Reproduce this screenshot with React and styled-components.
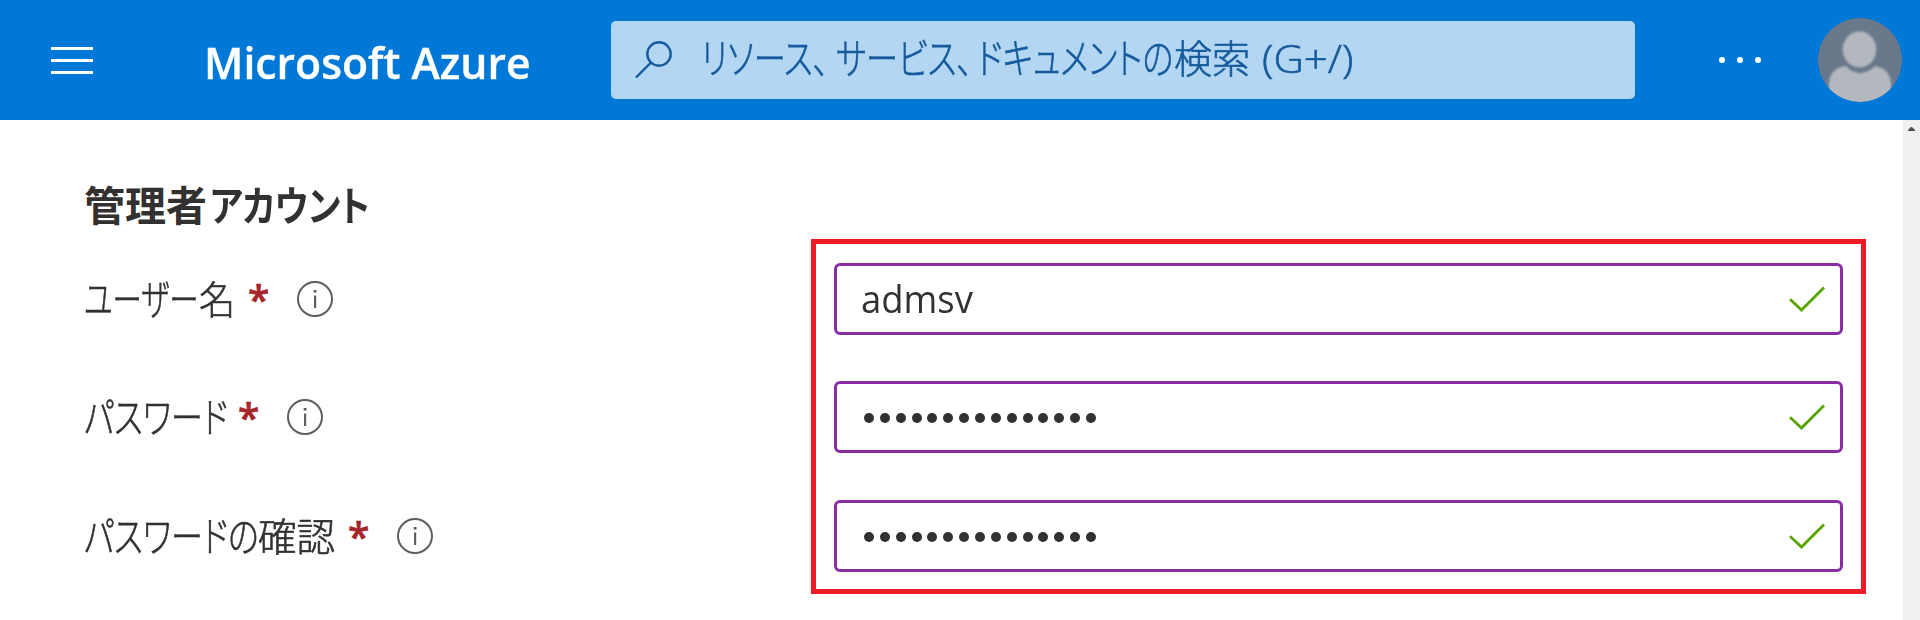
import React from "react";
import styled, { createGlobalStyle } from "styled-components";

const GlobalStyle = createGlobalStyle`
  * { box-sizing: border-box; }
  body {
    margin: 0;
    background: #fff;
    overflow: hidden;
    color: #323130;
    font-family: "Open Sans", "Noto Sans CJK JP", sans-serif;
  }
  svg { display: block; }
`;

const Page = styled.div`
  width: 1920px;
  height: 620px;
  display: flex;
  flex-direction: column;
`;

const TopBar = styled.header`
  height: 120px;
  flex: none;
  display: flex;
  align-items: center;
  background: #0078d7;
  padding: 0 18px 0 51px;
`;

const MenuButton = styled.div`
  width: 42px;
  height: 27px;
  display: flex;
  flex-direction: column;
  justify-content: space-between;
`;

const MenuLine = styled.span`
  height: 3px;
  background: #fff;
`;

const Brand = styled.div`
  margin-left: 111px;
  width: 407px;
  color: #fff;
  font-size: 44px;
  font-weight: 600;
  line-height: 60px;
  padding-top: 4px;
  white-space: nowrap;
  -webkit-text-stroke: 0.4px currentColor;
`;

const SearchBox = styled.div`
  width: 1024px;
  height: 78px;
  border-radius: 5px;
  background: #b3d6f2;
  color: #155a9c;
  display: flex;
  align-items: center;
  padding-left: 24px;
  font-size: 38.5px;
  line-height: 54px;
`;

const SearchText = styled.div`
  display: flex;
  margin-left: 29px;
  padding-bottom: 4px;
  font-weight: 300;
  -webkit-text-stroke: 0.6px currentColor;
`;

/* A stretch of text fitted to the narrow proportions of a UI face. */
const Run = styled.span`
  display: block;
  width: ${(p) => p.$w}px;
  white-space: pre;
  font-feature-settings: "palt";
  transform: scaleX(${(p) => p.$sx || 1});
  transform-origin: 0 50%;
`;

const Kana = styled(Run)`
  font-size: 41.5px;
`;

const MoreDots = styled.div`
  display: flex;
  gap: 12px;
  margin-left: 84px;
`;

const Dot = styled.span`
  width: 6px;
  height: 6px;
  border-radius: 50%;
  background: #fff;
`;

const Avatar = styled.svg`
  margin-left: auto;
`;

const Body = styled.main`
  flex: 1;
  display: flex;
`;

const Form = styled.section`
  flex: 1;
  display: flex;
  align-items: flex-start;
  padding-left: 84px;
`;

const Labels = styled.div`
  width: 727px;
  padding-top: 55px;
`;

const Heading = styled.h2`
  display: flex;
  margin: 0;
  height: 60px;
  font-size: 41px;
  line-height: 60px;
  font-weight: 600;
`;

const Label = styled.div`
  display: flex;
  align-items: center;
  height: 72px;
  margin-top: ${(p) => p.$gap}px;
  font-size: 39px;
  line-height: 56px;
  font-weight: 300;
  -webkit-text-stroke: 0.6px currentColor;
`;

const Required = styled.span`
  width: 20px;
  margin-right: 29px;
  color: #a4262c;
  font-weight: 600;
`;

const Frame = styled.div`
  width: 1055px;
  height: 355px;
  margin-top: 119px;
  border: 5px solid #ed1c24;
  padding: 19px 18px;
`;

const Field = styled.div`
  height: 72px;
  margin-bottom: ${(p) => p.$gap || 0}px;
  border: 3px solid #8a2da5;
  border-radius: 6px;
  display: flex;
  align-items: center;
  justify-content: space-between;
  padding: 0 15px 0 24px;
  font-size: 38px;
`;

const Value = styled(Run)`
  line-height: 54px;
  padding-bottom: 3px;
`;

const Mask = styled.span`
  display: flex;
  gap: 5.87px;
  padding: 2px 0 0 3px;
`;

const MaskDot = styled.span`
  width: 10px;
  height: 10px;
  border-radius: 50%;
  background: #323130;
`;

const ScrollTrack = styled.div`
  width: 17px;
  background: #f0f0f0;
  padding: 7px 0 0 5px;
`;

const Info = () => (
  <svg width="36" height="36" viewBox="0 0 36 36">
    <circle cx="18" cy="18" r="17" fill="none" stroke="#605e5c" strokeWidth="2" />
    <rect x="17" y="14.5" width="2.2" height="12.5" fill="#605e5c" />
    <rect x="16.7" y="9" width="2.8" height="2.6" fill="#605e5c" />
  </svg>
);

const Check = () => (
  <svg width="36" height="26" viewBox="0 0 36 26">
    <path d="M1 13.2 L12.5 24 L35 1.5" fill="none" stroke="#57a300" strokeWidth="2.7" />
  </svg>
);

const dots = Array.from({ length: 15 });
const Password = () => (
  <Mask>{dots.map((_, i) => <MaskDot key={i} />)}</Mask>
);

export default function App() {
  return (
    <Page>
      <GlobalStyle />
      <TopBar>
        <MenuButton><MenuLine /><MenuLine /><MenuLine /></MenuButton>
        <Brand><Run $w={400} $sx={0.972}>Microsoft Azure</Run></Brand>
        <SearchBox>
          <svg width="37" height="38" viewBox="0 0 37 38">
            <circle cx="24" cy="13" r="11.7" fill="none" stroke="#155a9c" strokeWidth="2.4" />
            <path d="M16 21.5 L1 36.5" stroke="#155a9c" strokeWidth="2.4" fill="none" />
          </svg>
          <SearchText>
            <Kana $w={135} $sx={0.775}>リソース、</Kana>
            <Kana $w={141} $sx={0.775}>サービス、</Kana>
            <Kana $w={197} $sx={0.78}>ドキュメントの</Kana>
            <Run $w={88} $sx={0.99}>検索</Run>
            <Run $w={97} $sx={1.09}>(G+/)</Run>
          </SearchText>
        </SearchBox>
        <MoreDots><Dot /><Dot /><Dot /></MoreDots>
        <Avatar width="84" height="84" viewBox="0 0 84 84">
          <defs>
            <clipPath id="face"><circle cx="42" cy="42" r="42" /></clipPath>
            <filter id="soft"><feGaussianBlur stdDeviation="0.8" /></filter>
          </defs>
          <g clipPath="url(#face)">
            <rect width="84" height="84" fill="#69788a" />
            <g filter="url(#soft)" fill="#b2b8bd">
              <ellipse cx="41.5" cy="31.5" rx="16.8" ry="18" />
              <path d="M11 90 V65 Q12 50 28 48 Q34 55 42 55 Q50 55 57 48 Q72 51 73 65 V90 Z" />
            </g>
          </g>
        </Avatar>
      </TopBar>
      <Body>
        <Form>
          <Labels>
            <Heading>
              <Run $w={126}>管理者</Run>
              <Run $w={160} $sx={0.855}>アカウント</Run>
            </Heading>
            <Label $gap={28}>
              <Kana $w={115} $sx={0.71}>ユーザー</Kana>
              <Run $w={49} $sx={0.93}>名</Run>
              <Required>*</Required>
              <Info />
            </Label>
            <Label $gap={46}>
              <Kana $w={154} $sx={0.77}>パスワード</Kana>
              <Required>*</Required>
              <Info />
            </Label>
            <Label $gap={47}>
              <Kana $w={174} $sx={0.77}>パスワードの</Kana>
              <Run $w={90} $sx={0.99}>確認</Run>
              <Required>*</Required>
              <Info />
            </Label>
          </Labels>
          <Frame>
            <Field $gap={46}><Value $w={120} $sx={0.96}>admsv</Value><Check /></Field>
            <Field $gap={47}><Password /><Check /></Field>
            <Field><Password /><Check /></Field>
          </Frame>
        </Form>
        <ScrollTrack>
          <svg width="7" height="4" viewBox="0 0 7 4"><path d="M0 4 V3 L3 0 H4 L7 3 V4 Z" fill="#505050" /></svg>
        </ScrollTrack>
      </Body>
    </Page>
  );
}
